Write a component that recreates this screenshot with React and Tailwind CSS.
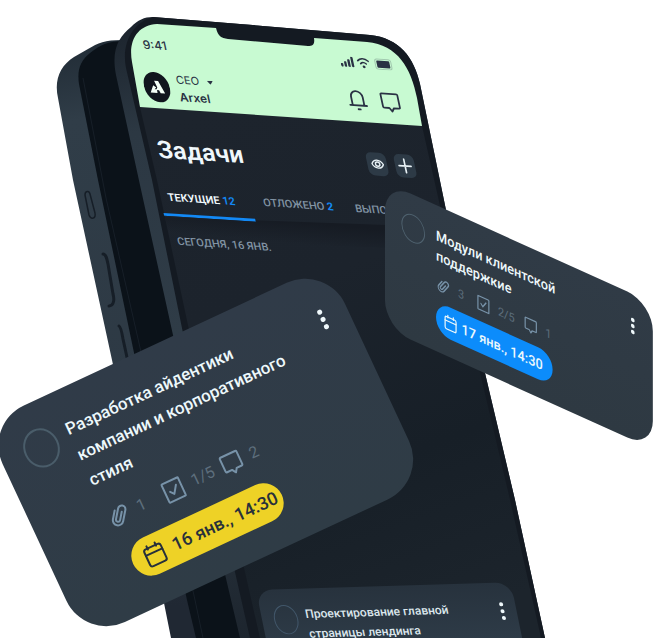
import React from "react";

function PaperclipIcon({ className }) {
  return (
    <svg className={className} viewBox="0 0 24 24" fill="none" stroke="currentColor" strokeWidth="2" strokeLinecap="round" strokeLinejoin="round" aria-hidden="true">
      <path d="M6.500 8v9a5.200 5.200 0 0 0 10.400 0V5.500a3.700 3.700 0 0 0-7.400 0V16.500a2.100 2.100 0 0 0 4.200 0V8" transform="rotate(36 12 12)" />
    </svg>
  );
}

function CheckSquareIcon({ className }) {
  return (
    <svg className={className} viewBox="0 0 24 24" fill="none" stroke="currentColor" strokeWidth="2" strokeLinecap="round" strokeLinejoin="round" aria-hidden="true">
      <rect x="3" y="2" width="18" height="20" rx="0.800" />
      <path d="M8 12.200l3 3.600 5.200-7.600" />
    </svg>
  );
}

function ChatIcon({ className }) {
  return (
    <svg className={className} viewBox="0 0 24 24" fill="none" stroke="currentColor" strokeWidth="2" strokeLinecap="round" strokeLinejoin="round" aria-hidden="true">
      <path d="M4 2.500h16A1.200 1.200 0 0 1 21.200 3.700v13.600a1.200 1.200 0 0 1-1.200 1.200h-5.500L12 22.300 9.500 18.500H4a1.200 1.200 0 0 1-1.200-1.200V3.700A1.200 1.200 0 0 1 4 2.500z" />
    </svg>
  );
}

function CalendarIcon({ className }) {
  return (
    <svg className={className} viewBox="0 0 24 24" fill="none" stroke="currentColor" strokeWidth="2" strokeLinecap="round" strokeLinejoin="round" aria-hidden="true">
      <rect x="3" y="4" width="18" height="18.500" rx="2.500" />
      <path d="M3 10h18M7.500 1.500V5M16.500 1.500V5" />
    </svg>
  );
}

function BellIcon({ className }) {
  return (
    <svg className={className} viewBox="0 0 24 26" fill="none" stroke="currentColor" strokeWidth="2.200" strokeLinecap="round" strokeLinejoin="round" aria-hidden="true">
      <path d="M2 19.500h20M5 19.500V9a7 7 0 0 1 14 0v10.500M11 24.200h2.500" />
    </svg>
  );
}

function EyeIcon({ className }) {
  return (
    <svg className={className} viewBox="0 0 24 24" fill="none" stroke="currentColor" strokeWidth="2.600" aria-hidden="true">
      <path d="M1.500 12C4 7 7.700 4.500 12 4.500S20 7 22.500 12C20 17 16.300 19.500 12 19.500S4 17 1.500 12z" />
      <circle cx="12" cy="12" r="4" />
    </svg>
  );
}

function PlusIcon({ className }) {
  return (
    <svg className={className} viewBox="0 0 16 16" fill="none" stroke="currentColor" strokeWidth="1.700" strokeLinecap="round" aria-hidden="true">
      <path d="M8 1v14M2 8h12" />
    </svg>
  );
}

function StatusIcons() {
  return (
    <svg className="h-3 w-[53px]" viewBox="0 0 53 12" fill="none" aria-hidden="true">
      <g fill="#2a3244">
        <rect x="0" y="7.500" width="2.400" height="3.500" rx="0.800" />
        <rect x="3.600" y="5.500" width="2.400" height="5.500" rx="0.800" />
        <rect x="7.200" y="3.200" width="2.400" height="7.800" rx="0.800" />
        <rect x="10.800" y="0.500" width="2.400" height="10.500" rx="0.800" />
        <circle cx="23" cy="10" r="1.400" />
        <rect x="36.500" y="2.500" width="13" height="7.500" rx="1" />
      </g>
      <g stroke="#2a3244" strokeWidth="1.600" strokeLinecap="round">
        <path d="M17.800 4C20.800 1 25.200 1 28.200 4M20.200 6.900c1.600-1.500 4-1.500 5.600 0" />
      </g>
      <rect x="35" y="1" width="16" height="10.500" rx="2.500" stroke="#2a3244" strokeOpacity="0.250" />
    </svg>
  );
}

function PhoneBodies() {
  return (
    <svg className="absolute left-0 top-0 h-[638px] w-[656px]" viewBox="0 0 656 638" fill="none" aria-hidden="true">
      <defs>
        <linearGradient id="rim" x1="60" y1="50" x2="170" y2="638" gradientUnits="userSpaceOnUse">
          <stop offset="0" stopColor="#222d37" />
          <stop offset="0.120" stopColor="#303d48" />
          <stop offset="0.600" stopColor="#2d3944" />
          <stop offset="0.950" stopColor="#202833" />
        </linearGradient>
        <linearGradient id="edge" x1="120" y1="20" x2="240" y2="638" gradientUnits="userSpaceOnUse">
          <stop offset="0" stopColor="#1b232c" />
          <stop offset="0.180" stopColor="#2c3843" />
          <stop offset="0.600" stopColor="#303d48" />
          <stop offset="1" stopColor="#1d252e" />
        </linearGradient>
        <linearGradient id="glass" x1="200" y1="110" x2="400" y2="638" gradientUnits="userSpaceOnUse">
          <stop offset="0" stopColor="#1d242d" />
          <stop offset="0.350" stopColor="#1c232c" />
          <stop offset="0.700" stopColor="#171f27" />
          <stop offset="1" stopColor="#1c242c" />
        </linearGradient>
        <linearGradient id="fold" x1="300" y1="222" x2="298" y2="244" gradientUnits="userSpaceOnUse">
          <stop offset="0" stopColor="#161b23" />
          <stop offset="1" stopColor="#161b23" stopOpacity="0" />
        </linearGradient>
      </defs>

      {/* rear handset */}
      <path d="M122 40C105 40 98 43 88 49L74 57C60 66 54 80 58 98L73 180L112 360L164 603L171 638H300L240 80z" fill="url(#rim)" />
      <path d="M124 41C108 41 100 45 90 53C80 61 77 70 79 84L98 180L133 348L187 600L196 638H300L240 80z" fill="#0b1219" />
      <path d="M83 78L106 198L141 352L195 600L203 638" stroke="#171f28" strokeWidth="1" />
      <g stroke="#161e27" strokeLinecap="round" strokeLinejoin="round">
        <path d="M85 195C85 191 89 190 90 194L95 213C96 219 91 220 89 215z" strokeWidth="1.500" />
        <path d="M103 254C106 254 107 259 108 264L113 294C115 301 113 306 109 306" strokeWidth="3" />
        <path d="M119 326C121 327 122 333 123 339L128 362" strokeWidth="3" />
      </g>

      {/* front handset */}
      <path d="M153 17L240 24L370 35C399 38 414 57 420 84L446 210L485 373L515 500L545 638H240L224 570L173 335L140 185L116 75C111 49 119 37 131 27C138 20 144 17 153 17z" fill="url(#edge)" />
      <path d="M153 17L240 24L370 35C399 38 414 57 420 84L446 210L485 373L515 500L545 638H250L235 572L183 333L152 180L126 68C121 42 134 22 153 17z" fill="#141a22" />
      <path d="M157 24L216 28C218 36 221 38 228 39L308 46C313 46 315 44 314 38L367 42C398 45 411 68 417 98L422 126L440 206L480 373L510 500L541 638H260L245 572L188 325L157 180L140 107L132 62C128 40 138 25 157 24z" fill="url(#glass)" />
      <path d="M165 217L444 227L449 250L170 240z" fill="url(#fold)" />
      <path d="M157 24L216 28C218 36 221 38 228 39L308 46C313 46 315 44 314 38L367 42C398 45 411 68 417 98L422 126L140 107L132 62C128 40 138 25 157 24z" fill="#c8fad2" />
    </svg>
  );
}

function AppScreen() {
  return (
    <section className="absolute left-[124px] top-[30px] w-[282px] origin-top-left [transform:matrix(0.998,0.065,0.21,0.978,0,0)]">
      <div className="flex h-7 items-center justify-between pr-4 pl-4 text-[#2a3244]">
        <time className="font-[Inter] text-[12px] leading-4 font-medium">9:41</time>
        <div className="pt-2">
          <StatusIcons />
        </div>
      </div>

      <header className="flex h-[50px] items-center pt-2 pl-2 text-[#2a3244]">
        <svg className="h-8 w-[26px]" viewBox="0 0 26 32" aria-hidden="true">
          <ellipse cx="13" cy="16" rx="13" ry="15.500" fill="#10151d" />
          <path d="M11.500 9.500h4L20 22h-4.500l-1-3h-2.800l1.600-2.600z" fill="#f4fff7" />
          <path d="M9.600 14.200l2.600 2.300-2 1.800h2.200V22H5.500z" fill="#f4fff7" />
        </svg>
        <div className="ml-2 font-[Inter] leading-[17px]">
          <button type="button" className="flex items-center gap-2 text-[11px]">
            CEO
            <svg className="h-1 w-[6px]" viewBox="0 0 6 4" fill="currentColor" aria-hidden="true">
              <path d="M0 0h6L3 4z" />
            </svg>
          </button>
          <p className="text-[12px] font-semibold">Arxel</p>
        </div>
        <div className="ml-auto flex items-center gap-3 pr-4">
          <button type="button" aria-label="Уведомления">
            <BellIcon className="h-6 w-5" />
          </button>
          <button type="button" aria-label="Сообщения">
            <ChatIcon className="h-6 w-[22px]" />
          </button>
        </div>
      </header>

      <div className="flex h-[84px] items-center pt-1 pl-2">
        <h1 className="font-[Roboto] text-[25px] leading-8 font-semibold text-[#f0f8fc]">Задачи</h1>
        <div className="ml-auto flex gap-2 pr-4 text-[#e8f1f5]">
          <button type="button" aria-label="Просмотр" className="flex h-6 w-5 items-center justify-center rounded-md bg-[#2d3a46]">
            <EyeIcon className="h-[14px] w-[13px]" />
          </button>
          <button type="button" aria-label="Добавить" className="flex h-6 w-5 items-center justify-center rounded-md bg-[#2d3a46]">
            <PlusIcon className="h-4 w-4" />
          </button>
        </div>
      </div>

      <nav className="flex w-[240px] gap-3 overflow-hidden font-[Roboto] text-[11px] leading-4 font-medium whitespace-nowrap text-[#8193a3]">
        <button type="button" className="w-[92px] shrink-0 border-b-3 border-[#1389f5] pb-2 pl-2 text-left font-semibold text-[#f0f8fc]">
          ТЕКУЩИЕ <span className="text-[#1389f5]">12</span>
        </button>
        <button type="button" className="w-20 shrink-0 pb-3 text-left">
          ОТЛОЖЕНО <span className="font-bold text-[#1389f5]">2</span>
        </button>
        <button type="button" className="shrink-0 pb-3 text-left">ВЫПОЛНЕНО</button>
      </nav>
      <h2 className="pt-[18px] pl-2 font-[Roboto] text-[11px] leading-4 font-medium text-[#8193a3]">СЕГОДНЯ, 16 ЯНВ.</h2>
    </section>
  );
}

function MoreDots({ className }) {
  return (
    <button type="button" aria-label="Ещё" className={className}>
      <span className="rounded-full bg-[#eff8fb]" />
      <span className="rounded-full bg-[#eff8fb]" />
      <span className="rounded-full bg-[#eff8fb]" />
    </button>
  );
}

function BrandingCard() {
  return (
    <article className="absolute left-[-16px] top-[424px] flex h-[239px] w-[378px] origin-top-left rotate-[-25deg] items-start rounded-[44px] bg-linear-to-b from-[#303b48] to-[#2f3c46] pt-[26px] pr-6 pl-6 font-[Roboto]">
      <input type="checkbox" aria-label="Разработка айдентики" className="h-10 w-9 shrink-0 appearance-none rounded-[50%] border-2 border-[#4a5d6a]" />
      <div className="ml-3 flex-1">
        <h3 className="text-[17px] leading-7 font-medium whitespace-nowrap text-[#edf8fb]">
          Разработка айдентики
          <br />
          компании и корпоративного
          <br />
          стиля
        </h3>
        <div className="flex h-[60px] items-center text-[16px] leading-6 text-[#5d6e7c]">
          <PaperclipIcon className="h-7 w-6 text-[#7792a8]" />
          <span className="ml-2 w-7">1</span>
          <CheckSquareIcon className="h-6 w-6 text-[#7792a8]" />
          <span className="ml-2 w-8">1/5</span>
          <ChatIcon className="h-6 w-6 text-[#7792a8]" />
          <span className="ml-2">2</span>
        </div>
        <time className="ml-1 flex h-10 w-[164px] items-center gap-2 rounded-full bg-[#eed226] pl-3 text-[18px] leading-6 font-medium whitespace-nowrap text-[#27303b]">
          <CalendarIcon className="h-6 w-6 shrink-0" />
          16 янв., 14:30
        </time>
      </div>
      <MoreDots className="mt-3 grid auto-rows-[5px] grid-cols-[5px] gap-[3px]" />
    </article>
  );
}

function SupportCard() {
  return (
    <article className="absolute left-[385px] top-[182px] flex h-[146px] w-[294px] origin-top-left items-start rounded-[28px] bg-linear-to-b from-[#303b46] to-[#2e3942] pt-5 pr-5 pl-[18px] font-[Roboto] [transform:matrix(0.911,0.412,0,1,0,0)]">
      <input type="checkbox" aria-label="Модули клиентской поддержкие" className="h-7 w-[26px] shrink-0 appearance-none rounded-[50%] border border-[#4f626f]" />
      <div className="ml-3 flex-1">
        <h3 className="text-[14px] leading-5 font-medium whitespace-nowrap text-[#edf8fb]">
          Модули клиентской
          <br />
          поддержкие
        </h3>
        <div className="flex h-9 items-center text-[12px] leading-4 text-[#5d6e7c]">
          <PaperclipIcon className="h-[18px] w-4 text-[#7792a8]" />
          <span className="ml-2 w-5">3</span>
          <CheckSquareIcon className="h-5 w-4 text-[#7792a8]" />
          <span className="ml-2 w-7">2/5</span>
          <ChatIcon className="h-[18px] w-4 text-[#7792a8]" />
          <span className="ml-2">1</span>
        </div>
        <time className="flex h-8 w-32 items-center gap-1 rounded-full bg-[#0c8cfb] pl-2 text-[14px] leading-5 font-medium whitespace-nowrap text-[#edf8fb]">
          <CalendarIcon className="h-5 w-4 shrink-0" />
          17 янв., 14:30
        </time>
      </div>
      <MoreDots className="mt-1 grid auto-rows-[4px] grid-cols-[4px] gap-[2px]" />
    </article>
  );
}

function LandingCard() {
  return (
    <article className="absolute left-[256px] top-[590px] flex h-[100px] w-[255px] origin-top-left items-start rounded-2xl bg-linear-to-b from-[#27323d] to-[#33424f] pt-4 pr-3 pl-3 font-[Roboto] [transform:matrix(0.999,-0.03,0.2,0.98,0,0)]">
      <input type="checkbox" aria-label="Проектирование главной страницы лендинга" className="h-[30px] w-6 shrink-0 appearance-none rounded-[50%] border border-[#42576a]" />
      <h3 className="ml-2 flex-1 text-[12px] leading-5 font-medium whitespace-nowrap text-[#dce7ed]">
        Проектирование главной
        <br />
        страницы лендинга
      </h3>
      <MoreDots className="mt-1 grid auto-rows-[4px] grid-cols-[4px] gap-[3px]" />
    </article>
  );
}

export default function App() {
  return (
    <main className="relative h-screen min-h-[638px] w-full overflow-hidden bg-white">
      <PhoneBodies />
      <AppScreen />
      <LandingCard />
      <SupportCard />
      <BrandingCard />
    </main>
  );
}
